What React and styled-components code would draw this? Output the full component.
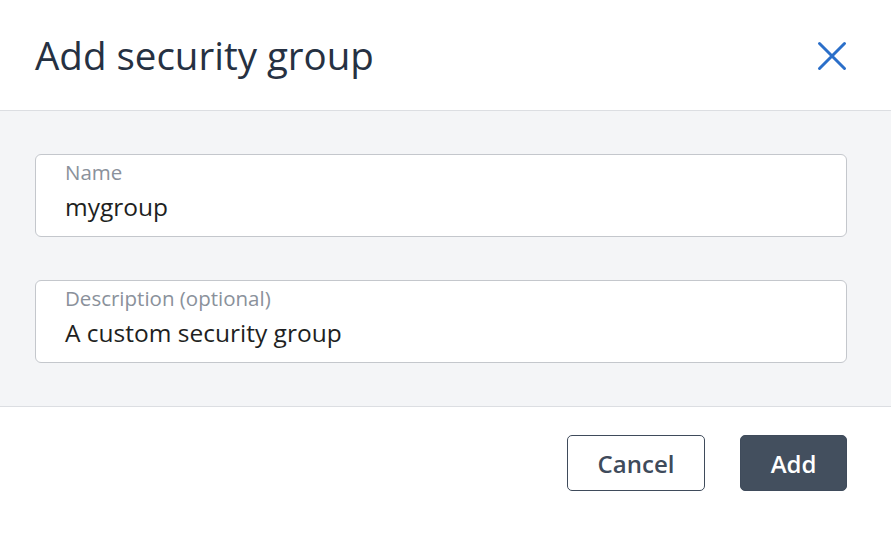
import React from 'react';
import styled, { createGlobalStyle } from 'styled-components';

const GlobalStyle = createGlobalStyle`
    html, body {
        margin: 0;
        padding: 0;
        background: #ffffff;
        font-family: "Open Sans", "Liberation Sans", sans-serif;
    }
`;

const Dialog = styled.div`
    width: 891px;
    height: 533px;
    display: flex;
    flex-direction: column;
    background: #ffffff;
`;

const Header = styled.div`
    height: 110px;
    display: flex;
    align-items: center;
    justify-content: space-between;
    padding: 0 35px;
    border-bottom: 1px solid #dcdee2;
    box-sizing: content-box;
`;

const Title = styled.h1`
    margin: 0;
    font-size: 38.5px;
    line-height: 52px;
    font-weight: 400;
    color: #263142;
`;

const CloseButton = styled.button`
    width: 30px;
    height: 30px;
    margin-right: 9px;
    margin-top: 1px;
    border: none;
    background: transparent;
    padding: 0;
    display: flex;
    align-items: center;
    justify-content: center;
    cursor: pointer;
`;

const Body = styled.div`
    background: #f4f5f7;
    padding: 43px 44px 43px 35px;
    display: flex;
    flex-direction: column;
    gap: 43px;
    border-bottom: 1px solid #dcdee2;
`;

const Field = styled.label`
    display: flex;
    flex-direction: column;
    height: 83px;
    box-sizing: border-box;
    padding: 5px 29px 0;
    background: #ffffff;
    border: 1px solid #c4c7cc;
    border-radius: 6px;
`;

const Label = styled.span`
    font-size: 20.5px;
    line-height: 24px;
    color: #8a919b;
`;

const Value = styled.span`
    margin-top: 7px;
    font-size: 24.5px;
    line-height: 32px;
    color: #1e1f22;
`;

const Footer = styled.div`
    display: flex;
    justify-content: flex-end;
    gap: 35px;
    padding: 28px 44px 0 0;
`;

const Button = styled.button`
    height: 56px;
    padding: 0;
    width: ${props => props.$width}px;
    border-radius: 5px;
    font-family: "Open Sans", "Liberation Sans", sans-serif;
    font-size: 24px;
    font-weight: 600;
    border: 1px solid #3f4b5b;
    cursor: pointer;
    ${props => (props.$primary
        ? `background: #434f5e; color: #ffffff;`
        : `background: #ffffff; color: #3f4b5b;`)}
`;

const CloseIcon = () => (
    <svg width="30" height="30" viewBox="0 0 30 30" fill="none">
        <path d="M2.5 2.5 L27.5 27.5 M27.5 2.5 L2.5 27.5" stroke="#2b6fc9" strokeWidth="3" strokeLinecap="round" />
    </svg>
);

const App = () => {
    return (
        <>
            <GlobalStyle />
            <Dialog>
                <Header>
                    <Title>Add security group</Title>
                    <CloseButton aria-label="Close">
                        <CloseIcon />
                    </CloseButton>
                </Header>
                <Body>
                    <Field>
                        <Label>Name</Label>
                        <Value>mygroup</Value>
                    </Field>
                    <Field>
                        <Label>Description (optional)</Label>
                        <Value>A custom security group</Value>
                    </Field>
                </Body>
                <Footer>
                    <Button $width={138}>Cancel</Button>
                    <Button $width={107} $primary>Add</Button>
                </Footer>
            </Dialog>
        </>
    );
};

export default App;
